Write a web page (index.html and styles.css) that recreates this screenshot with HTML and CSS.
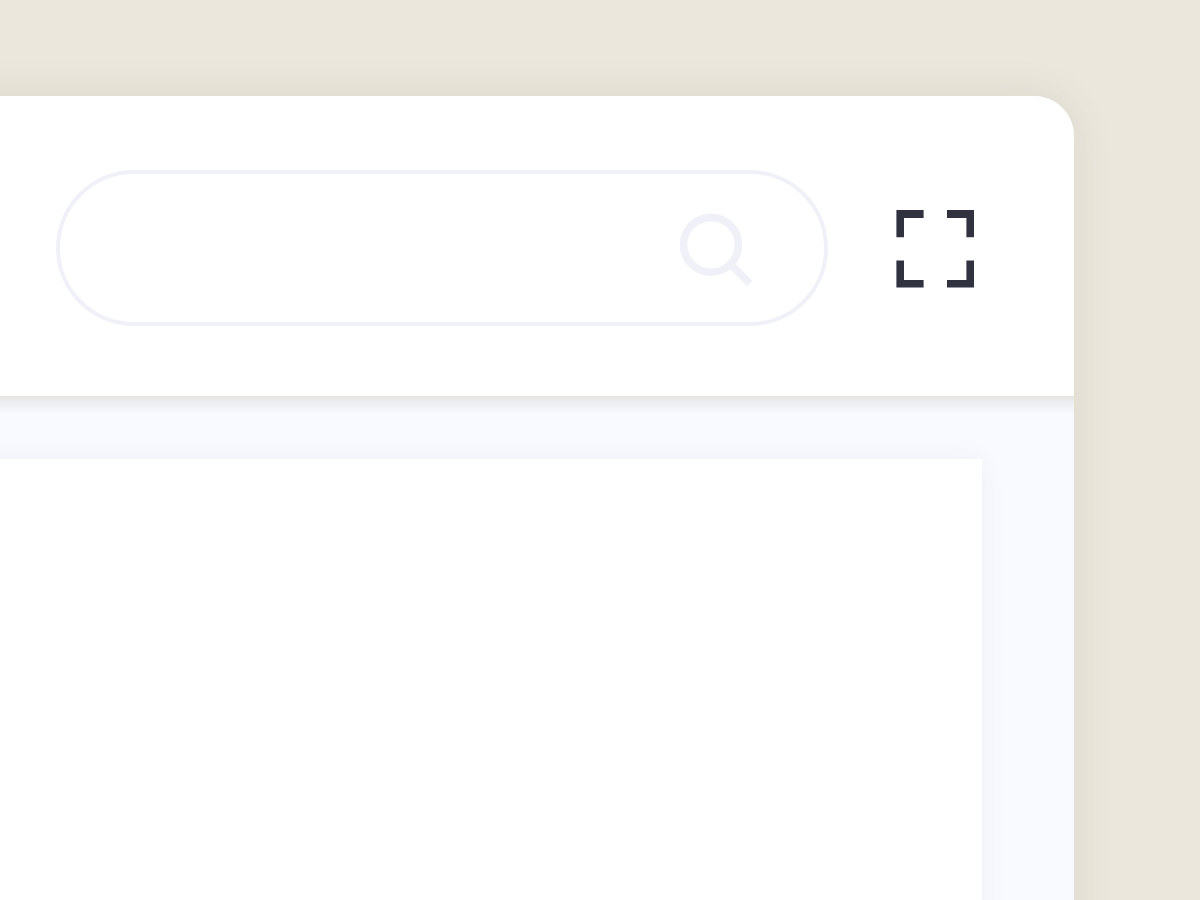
FILE: index.html
```
<!DOCTYPE html>
<html lang="en">

<head>
  <meta charset="UTF-8">
  <meta name="viewport" content="width=device-width, initial-scale=1.0">
  <title>Search</title>
  <link rel="stylesheet" href="styles.css">
</head>

<body>
  <div class="window">
    <header class="toolbar">
      <form class="search" role="search">
        <input type="search" class="search-input" aria-label="Search">
        <button type="submit" class="search-button" aria-label="Search">
          <svg width="80" height="80" viewBox="0 0 80 80" fill="none" stroke="currentColor" stroke-width="7.6">
            <circle cx="35" cy="36.8" r="27.4" />
            <path d="M54.5 56L73.8 75.6" />
          </svg>
        </button>
      </form>
      <button type="button" class="fullscreen-button" aria-label="Full screen">
        <svg width="78" height="80" viewBox="0 0 78 80" fill="currentColor">
          <path d="M0.4 2H27.6V10H8V29.2H0.4Z" />
          <path d="M51 2H78V29.2H70.4V10H51Z" />
          <path d="M0.4 52.4H8V72H27.6V79.6H0.4Z" />
          <path d="M70.4 52.4H78V79.6H51V72H70.4Z" />
        </svg>
      </button>
    </header>
    <main class="content">
      <section class="card"></section>
    </main>
  </div>
</body>

</html>
```

FILE: styles.css
```
* {
  box-sizing: border-box;
}

body {
  display: flex;
  min-height: 100vh;
  margin: 0;
  padding: 96px 126px 0 0;
  overflow: hidden;
  background-color: #ebe7dc;
  font-family: "Liberation Sans", Arial, sans-serif;
}

/* the window runs off the left and bottom edges of the page */
.window {
  display: flex;
  flex: 1;
  flex-direction: column;
  min-width: 0;
  margin: 0 0 -60px -60px;
  border-radius: 0 40px 0 0;
  background-color: #f8faff;
  box-shadow: 0 0 40px rgba(90, 85, 75, 0.11);
}

.toolbar {
  position: relative;
  display: flex;
  align-items: center;
  gap: 68px;
  padding: 74px 100px 70px 116px;
  border-radius: 0 40px 0 0;
  background-color: #fff;
}

/* shadow under the toolbar, kept inside the window */
.toolbar::after {
  content: "";
  position: absolute;
  top: 100%;
  left: 0;
  right: 0;
  height: 18px;
  background: linear-gradient(#e6e4e0, #eeeff2 40%, #f8faff);
}

.search {
  display: flex;
  flex: 1;
  align-items: center;
  min-width: 0;
  height: 156px;
  padding: 0 68px 0 68px;
  border: 4px solid #f0f1f8;
  border-radius: 78px;
}

.search-input {
  flex: 1;
  min-width: 0;
  height: 80px;
  padding: 0;
  border: none;
  outline: none;
  background: none;
  color: #303240;
  font-size: 48px;
}

.search-button,
.fullscreen-button {
  padding: 0;
  border: none;
  background: none;
  cursor: pointer;
}

.search-button {
  color: #f0f1f8;
}

.fullscreen-button {
  color: #303240;
}

.search-button svg,
.fullscreen-button svg {
  display: block;
}

.content {
  display: flex;
  flex: 1;
  padding: 63px 92px 0 0;
  overflow: hidden;
}

.card {
  flex: 1;
  background-color: #fff;
  box-shadow: 0 0 24px rgba(60, 65, 95, 0.06);
}
```
